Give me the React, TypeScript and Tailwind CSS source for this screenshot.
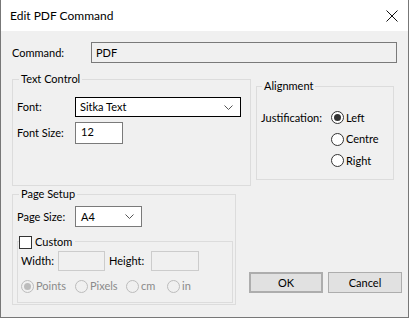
import { ReactNode } from 'react';

function Radio({ checked = false, disabled = false, label }: { checked?: boolean; disabled?: boolean; label: string }) {
  return (
    <div className={`flex items-center ${disabled ? 'text-[#8a8a8a]' : 'text-black'}`}>
      <span
        className={`w-[13px] h-[13px] rounded-full border flex items-center justify-center ${
          disabled ? 'border-[#bcbcbc] bg-[#f0f0f0]' : 'border-[#333333] bg-white'
        }`}
      >
        {checked && <span className={`w-[7px] h-[7px] rounded-full ${disabled ? 'bg-[#bcbcbc]' : 'bg-[#333333]'}`} />}
      </span>
      <span className="ml-[2px]">{label}</span>
    </div>
  );
}

function Chevron() {
  return (
    <svg width="9" height="5" viewBox="0 0 9 5" className="text-[#555555]">
      <path d="M0.5 0.5 L4.5 4.5 L8.5 0.5" fill="none" stroke="currentColor" strokeWidth="1" />
    </svg>
  );
}

function Group({ title, className, legendLeft = 'left-[6px]', children }: { title: string; className: string; legendLeft?: string; children: ReactNode }) {
  return (
    <div className={`relative border border-[#dcdcdc] ${className}`}>
      <span className={`absolute ${legendLeft} top-[-9px] px-[2px] bg-[#f0f0f0] leading-[16px]`}>{title}</span>
      {children}
    </div>
  );
}

export default function App() {
  return (
    <div
      className="w-[409px] h-[318px] flex flex-col bg-[#f0f0f0] border border-t-0 border-[#777777] text-[11px] text-black leading-[16px] overflow-hidden"
      style={{ fontFamily: 'Lato, "Noto Sans", sans-serif' }}
    >
      {/* title bar */}
      <div className="h-[31px] bg-white flex items-center justify-between pl-[9px] pr-[10px] shrink-0">
        <span className="text-[12px]">Edit PDF Command</span>
        <svg width="12" height="12" viewBox="0 0 12 12">
          <path d="M0.5 0.5 L11.5 11.5 M11.5 0.5 L0.5 11.5" stroke="#111111" strokeWidth="1" />
        </svg>
      </div>

      <div className="flex-1 flex flex-col pl-[11px]">
        {/* command row */}
        <div className="flex items-center mt-[11px]">
          <span className="w-[79px]">Command:</span>
          <div className="w-[306px] h-[21px] border border-[#7a7a7a] bg-[#f0f0f0] pl-[4px] flex items-center">PDF</div>
        </div>

        <div className="flex mt-[16px]">
          {/* left column */}
          <div className="w-[239px] flex flex-col">
            <Group title="Text Control" className="h-[107px] pt-[17px] pl-[4px]">
              <div className="flex items-center">
                <span className="w-[58px]">Font:</span>
                <div className="w-[166px] h-[20px] border border-black bg-white flex items-center justify-between pl-[4px] pr-[7px]">
                  <span>Sitka Text</span>
                  <Chevron />
                </div>
              </div>
              <div className="flex items-center mt-[5px]">
                <span className="w-[58px]">Font Size:</span>
                <div className="w-[48px] h-[22px] border border-[#7a7a7a] bg-white pl-[5px] pt-[1px]">12</div>
              </div>
            </Group>

            <Group title="Page Setup" className="w-[224px] h-[111px] mt-[8px] pt-[11px]">
              <div className="flex items-center pl-[4px]">
                <span className="w-[58px]">Page Size:</span>
                <div className="w-[67px] h-[21px] border border-[#7a7a7a] bg-white flex items-center justify-between pl-[5px] pr-[7px]">
                  <span>A4</span>
                  <Chevron />
                </div>
              </div>

              <div className="relative ml-[4px] mt-[14px] w-[216px] h-[62px] border border-[#dcdcdc] pl-[3px] pt-[9px]">
                <div className="absolute left-[1px] top-[-8px] flex items-center bg-[#f0f0f0] pr-[3px]">
                  <span className="w-[13px] h-[13px] border border-[#333333] bg-white" />
                  <span className="ml-[3px]">Custom</span>
                </div>
                <div className="flex items-center">
                  <span className="w-[37px]">Width:</span>
                  <div className="w-[47px] h-[20px] border border-[#cccccc] bg-[#f0f0f0]" />
                  <span className="ml-[4px] w-[42px]">Height:</span>
                  <div className="w-[48px] h-[20px] border border-[#cccccc] bg-[#f0f0f0]" />
                </div>
                <div className="flex items-center mt-[7px]">
                  <div className="w-[54px]"><Radio checked disabled label="Points" /></div>
                  <div className="w-[51px]"><Radio disabled label="Pixels" /></div>
                  <div className="w-[41px]"><Radio disabled label="cm" /></div>
                  <Radio disabled label="in" />
                </div>
              </div>
            </Group>
          </div>

          {/* right column */}
          <div className="flex-1 flex flex-col pl-[5px] pt-[7px]">
            <Group title="Alignment" legendLeft="left-[5px]" className="w-[138px] h-[94px] pt-[20px] pl-[4px]">
              <div className="flex">
                <span className="w-[70px] h-[21px] flex items-center">Justification:</span>
                <div className="flex flex-col">
                  <div className="h-[21px] flex items-center"><Radio checked label="Left" /></div>
                  <div className="h-[22px] flex items-center"><Radio label="Centre" /></div>
                  <div className="h-[21px] flex items-center"><Radio label="Right" /></div>
                </div>
              </div>
            </Group>

            <div className="flex gap-[5px] mt-auto mb-[12px] ml-[-7px]">
              <button className="w-[74px] h-[21px] border-2 border-[#adadad] bg-[#e1e1e1] flex items-center justify-center">OK</button>
              <button className="w-[74px] h-[21px] border border-[#adadad] bg-[#e1e1e1] flex items-center justify-center">Cancel</button>
            </div>
          </div>
        </div>
      </div>
    </div>
  );
}
